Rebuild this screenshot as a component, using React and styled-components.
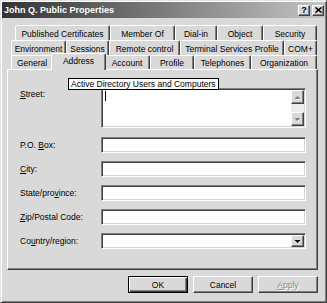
import React from 'react'
import styled, { createGlobalStyle, css } from 'styled-components'

const GlobalStyle = createGlobalStyle`
  html, body { margin: 0; padding: 0; background: #d9d9d9; }
  body {
    font-family: "Liberation Sans", Arial, sans-serif;
    font-size: 8.5px;
    color: #000;
  }
`

const raised = css`
  border: 1px solid;
  border-color: #fff #404040 #404040 #fff;
  box-shadow: inset -1px -1px #808080;
  background: #d9d9d9;
`

const sunken = css`
  border: 1px solid;
  border-color: #808080 #fff #fff #808080;
  box-shadow: inset 1px 1px #404040, inset -1px -1px #d4d4d4;
  background: #fff;
`

const Window = styled.div`
  position: relative;
  width: 327px;
  height: 303px;
  box-sizing: border-box;
  background: #d9d9d9;
  border: 1px solid;
  border-color: #e4e4e4 #404040 #404040 #e4e4e4;
  box-shadow: inset 1px 1px #fff, inset -1px -1px #808080;
  padding: 1px;
  display: flex;
  flex-direction: column;
`

const TitleBar = styled.div`
  height: 16px;
  display: flex;
  align-items: center;
  padding: 0 1px 0 2px;
  background: linear-gradient(to right, #333 0%, #6e6e6e 40%, #c4c4c4 100%);
`

const Title = styled.span`
  font-weight: bold;
  font-size: 9px;
  color: #fff;
  white-space: nowrap;
`

const CaptionButtons = styled.div`
  margin-left: auto;
  display: flex;
  gap: 2px;
`

const CaptionButton = styled.div`
  ${raised}
  width: 12px;
  height: 11px;
  box-sizing: border-box;
  display: flex;
  align-items: center;
  justify-content: center;
  font-weight: bold;
  font-size: 9px;
  line-height: 1;
`

const TabStrip = styled.div`
  margin-top: 7px;
  display: flex;
  flex-direction: column;
`

const TabRow = styled.div`
  display: flex;
  height: ${p => p.h}px;
  margin-left: ${p => p.indent}px;
`

const Tab = styled.div`
  width: ${p => p.w}px;
  box-sizing: border-box;
  border-top: 1px solid #fff;
  border-left: 1px solid #fff;
  border-right: 1px solid #404040;
  box-shadow: inset -1px 0 #808080;
  border-radius: 2px 2px 0 0;
  display: flex;
  align-items: center;
  justify-content: center;
  white-space: nowrap;
  padding-top: 1px;
  ${p => p.active && css`
    position: relative;
    z-index: 1;
    background: #d9d9d9;
    margin: -2px -2px 0 -2px;
    width: ${p.w + 4}px;
    padding-top: 0;
    padding-bottom: 2px;
    height: calc(100% + 3px);
  `}
`

const Panel = styled.div`
  margin-left: 5px;
  width: 311px;
  height: 201px;
  box-sizing: border-box;
  border: 1px solid;
  border-color: #fff #404040 #404040 #fff;
  box-shadow: inset -1px -1px #808080;
  padding: 18px 11px 0 12px;
`

const Form = styled.div`
  display: grid;
  grid-template-columns: 81px 205px;
  row-gap: 8px;
`

const Label = styled.div`
  display: flex;
  align-items: ${p => (p.top ? 'flex-start' : 'center')};
  padding-top: ${p => (p.top ? '1px' : '0')};
  white-space: nowrap;
  ${p => p.spaced && css`margin-bottom: 1px;`}
`

const Field = styled.div`
  ${sunken}
  box-sizing: border-box;
  height: ${p => p.h || 16}px;
  display: flex;
  padding: 1px;
  ${p => p.spaced && css`margin-bottom: 1px;`}
`

const TextArea = styled.div`
  flex: 1;
  padding: 1px 0 0 2px;
`

const Caret = styled.span`
  display: block;
  width: 1px;
  height: 10px;
  background: #000;
`

const ScrollBar = styled.div`
  width: 13px;
  display: flex;
  flex-direction: column;
  background: #ececec;
`

const ScrollTrack = styled.div`
  flex: 1;
`

const ArrowButton = styled.div`
  ${raised}
  box-sizing: border-box;
  width: 13px;
  height: ${p => p.h}px;
  display: flex;
  align-items: center;
  justify-content: center;
`

const Tooltip = styled.div`
  position: absolute;
  left: 67px;
  top: 77px;
  height: 12px;
  box-sizing: border-box;
  padding: 0 2px;
  border: 1px solid #000;
  background: #fbfbfb;
  display: flex;
  align-items: center;
  white-space: nowrap;
`

const ButtonRow = styled.div`
  display: flex;
  justify-content: flex-end;
  gap: 5px;
  margin-top: 6px;
  padding-right: 7px;
`

const Button = styled.div`
  width: 60px;
  height: 17px;
  box-sizing: border-box;
  display: flex;
  align-items: center;
  justify-content: center;
  ${raised}
  ${p => p.primary && css`
    border: 1px solid #000;
    box-shadow: inset 1px 1px #fff, inset -1px -1px #404040, inset -2px -2px #808080;
  `}
  ${p => p.disabled && css`
    color: #8a8a8a;
    text-shadow: 1px 1px #fff;
  `}
`

const Arrow = ({ down, color = '#000', shadow }) => (
  <svg width="7" height="5" viewBox="0 0 7 5">
    {shadow && (
      <polygon
        points={down ? '1.5,1.5 7,1.5 4.25,4.5' : '4.25,1.5 7,4.5 1.5,4.5'}
        fill="#fff"
      />
    )}
    <polygon points={down ? '0.5,1 6.5,1 3.5,4' : '3.5,1 6.5,4 0.5,4'} fill={color} />
  </svg>
)

const CloseGlyph = () => (
  <svg width="7" height="6" viewBox="0 0 7 6">
    <path d="M0.5 0.5 L6.5 5.5 M6.5 0.5 L0.5 5.5" stroke="#000" strokeWidth="1.6" />
  </svg>
)

const rows = [
  { indent: 13, h: 15, tabs: [['Published Certificates', 95], ['Member Of', 65], ['Dial-in', 42], ['Object', 46], ['Security', 54]] },
  { indent: 9, h: 15, tabs: [['Environment', 55], ['Sessions', 43], ['Remote control', 71], ['Terminal Services Profile', 104], ['COM+', 33]] },
  { indent: 9, h: 14, tabs: [['General', 42], ['Address', 51], ['Account', 46], ['Profile', 44], ['Telephones', 57], ['Organization', 66]] },
]

export default function App() {
  return (
    <>
      <GlobalStyle />
      <Window>
        <TitleBar>
          <Title>John Q. Public Properties</Title>
          <CaptionButtons>
            <CaptionButton>?</CaptionButton>
            <CaptionButton><CloseGlyph /></CaptionButton>
          </CaptionButtons>
        </TitleBar>

        <TabStrip>
          {rows.map((row, i) => (
            <TabRow key={i} indent={row.indent} h={row.h}>
              {row.tabs.map(([name, w]) => (
                <Tab key={name} w={w} active={name === 'Address'}>{name}</Tab>
              ))}
            </TabRow>
          ))}
        </TabStrip>

        <Panel>
          <Form>
            <Label top spaced><span><u>S</u>treet:</span></Label>
            <Field h={40} spaced>
              <TextArea><Caret /></TextArea>
              <ScrollBar>
                <ArrowButton h={14}><Arrow color="#808080" shadow /></ArrowButton>
                <ScrollTrack />
                <ArrowButton h={14}><Arrow down color="#808080" shadow /></ArrowButton>
              </ScrollBar>
            </Field>

            <Label><span>P.O. <u>B</u>ox:</span></Label>
            <Field />

            <Label><span><u>C</u>ity:</span></Label>
            <Field />

            <Label><span>State/pro<u>v</u>ince:</span></Label>
            <Field />

            <Label><span><u>Z</u>ip/Postal Code:</span></Label>
            <Field />

            <Label><span>Co<u>u</u>ntry/region:</span></Label>
            <Field>
              <TextArea />
              <ArrowButton h={12}><Arrow down /></ArrowButton>
            </Field>
          </Form>
        </Panel>

        <ButtonRow>
          <Button primary>OK</Button>
          <Button>Cancel</Button>
          <Button disabled><span><u>A</u>pply</span></Button>
        </ButtonRow>

        <Tooltip>Active Directory Users and Computers</Tooltip>
      </Window>
    </>
  )
}
